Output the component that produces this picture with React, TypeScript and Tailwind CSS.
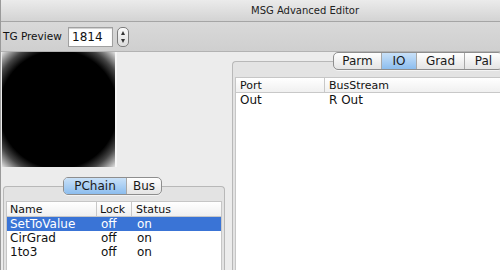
const font = { fontFamily: '"DejaVu Sans", "Liberation Sans", sans-serif' };

function Segmented({ items, active }: { items: { label: string; w: number }[]; active: string }) {
  return (
    <div className="relative z-10 shrink-0 flex h-[18px] rounded-[5px] border border-[#8e8e8e] bg-gradient-to-b from-[#ffffff] to-[#e4e4e4] shadow-[0_1px_0_rgba(255,255,255,0.6)] overflow-hidden">
      {items.map((it, i) => (
        <div
          key={it.label}
          style={{ width: it.w }}
          className={
            'shrink-0 flex items-center justify-center text-[12px] leading-none text-[#1a1a1a] ' +
            (i > 0 ? 'border-l border-[#a8a8a8] ' : '') +
            (it.label === active ? 'bg-gradient-to-b from-[#c9e1f8] to-[#8cbdee]' : '')
          }
        >
          {it.label}
        </div>
      ))}
    </div>
  );
}

export default function App() {
  const rows = [
    { name: 'SetToValue', lock: 'off', status: 'on' },
    { name: 'CirGrad', lock: 'off', status: 'on' },
    { name: '1to3', lock: 'off', status: 'on' },
  ];

  return (
    <div style={font} className="w-[500px] h-[270px] overflow-hidden bg-[#ececec] flex flex-col border-l border-[#9a9a9a]">
      {/* title bar */}
      <div className="h-[22px] shrink-0 bg-gradient-to-b from-[#ebebeb] to-[#d3d3d3] border-b border-[#a5a5a5] flex items-center">
        <div className="ml-[250px] text-[10px] text-[#222] whitespace-nowrap">MSG Advanced Editor</div>
      </div>

      {/* toolbar */}
      <div className="h-[30px] shrink-0 bg-gradient-to-b from-[#d9d9d9] to-[#cfcfcf] border-b border-[#b2b2b2] flex items-center pl-[2px]">
        <span className="w-[65px] text-[10.5px] text-[#111] whitespace-nowrap">TG Preview</span>
        <div className="w-[45px] h-[20px] bg-white border border-[#a0a0a0] shadow-[inset_0_1px_1px_rgba(0,0,0,0.2)] flex items-center pl-[3px] text-[12px] text-[#111]">
          1814
        </div>
        <div className="ml-[4px] w-[12px] h-[20px] rounded-[5px] border border-[#7d7d7d] bg-gradient-to-b from-[#fafafa] to-[#dcdcdc] flex flex-col items-center justify-center gap-[4px]">
          <div className="w-0 h-0 border-l-[2.5px] border-r-[2.5px] border-b-[4px] border-l-transparent border-r-transparent border-b-[#333]" />
          <div className="w-0 h-0 border-l-[2.5px] border-r-[2.5px] border-t-[4px] border-l-transparent border-r-transparent border-t-[#333]" />
        </div>
      </div>

      {/* body */}
      <div className="flex-1 flex min-h-0">
        {/* left */}
        <div className="w-[231px] shrink-0 flex flex-col">
          <div className="ml-[1px] w-[115px] h-[115px] border-r-2 border-[#f6f6f6]">
            <div className="w-full h-full bg-[radial-gradient(circle_farthest-corner,#000_73%,#444_84%,#e2e2e2_100%)]" />
          </div>
          <div className="mt-[10px] flex-1 flex flex-col">
            <div className="flex w-[224px] -mb-[9px] pl-[62px]">
              <Segmented items={[{ label: 'PChain', w: 62 }, { label: 'Bus', w: 35 }]} active="PChain" />
            </div>
            <div className="ml-[2px] w-[222px] flex-1 rounded-t-[4px] border border-b-0 border-[#b8b8b8] bg-[#e3e3e3] pt-[14px] px-[2px]">
              <div className="h-full bg-white border border-[#c6c6c6] border-b-0">
                <div className="flex h-[15px] border-b border-[#c8c8c8] bg-gradient-to-b from-[#ffffff] to-[#f0f0f0] text-[11px] text-[#111]">
                  <div className="w-[90px] pl-[3px] border-r border-[#c8c8c8] leading-[15px]">Name</div>
                  <div className="w-[35px] pl-[3px] border-r border-[#c8c8c8] leading-[15px]">Lock</div>
                  <div className="flex-1 pl-[4px] leading-[15px]">Status</div>
                </div>
                {rows.map((r, i) => (
                  <div
                    key={r.name}
                    className={
                      'flex h-[14px] text-[12px] leading-[14px] ' +
                      (i === 0 ? 'bg-[#3a74d6] text-white' : 'text-[#111]')
                    }
                  >
                    <div className="w-[90px] pl-[3px]">{r.name}</div>
                    <div className="w-[35px] pl-[4px]">{r.lock}</div>
                    <div className="flex-1 pl-[5px]">{r.status}</div>
                  </div>
                ))}
              </div>
            </div>
          </div>
        </div>

        {/* right */}
        <div className="flex-1 flex flex-col min-w-0">
          <div className="flex pl-[101px] -mb-[9px]">
            <Segmented
              items={[
                { label: 'Parm', w: 47 },
                { label: 'IO', w: 35 },
                { label: 'Grad', w: 48 },
                { label: 'Pal', w: 38 },
              ]}
              active="IO"
            />
          </div>
          <div className="flex-1 rounded-tl-[4px] border-l border-t border-[#b8b8b8] bg-[#e3e3e3] pt-[15px] pl-[2px]">
            <div className="h-full bg-white border-l border-t border-[#c6c6c6]">
              <div className="flex h-[15px] border-b border-[#c8c8c8] bg-gradient-to-b from-[#ffffff] to-[#f0f0f0] text-[11px] text-[#111]">
                <div className="w-[89px] pl-[4px] border-r border-[#c8c8c8] leading-[15px]">Port</div>
                <div className="flex-1 pl-[4px] leading-[15px]">BusStream</div>
              </div>
              <div className="flex h-[15px] text-[12px] leading-[15px] text-[#111]">
                <div className="w-[89px] pl-[4px]">Out</div>
                <div className="flex-1 pl-[4px]">R Out</div>
              </div>
            </div>
          </div>
        </div>
      </div>
    </div>
  );
}
